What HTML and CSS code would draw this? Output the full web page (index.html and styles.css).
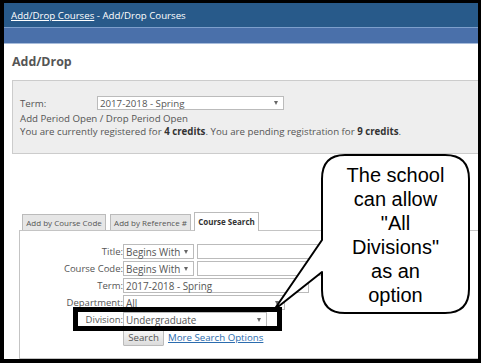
FILE: index.html
```html
<!DOCTYPE html>
<html lang="en">
<head>
<meta charset="utf-8">
<title>Add/Drop Courses</title>
<link rel="stylesheet" href="styles.css">
</head>
<body>
<div class="frame">
  <header class="topbar"><a class="crumb" href="#">Add/Drop Courses</a><span class="crumb-rest">&nbsp;- Add/Drop Courses</span></header>
  <div class="subbar"></div>
  <main class="content">
    <h1 class="title">Add/Drop</h1>
    <section class="termbox">
      <div class="termrow">
        <span class="termlabel">Term:</span>
        <div class="field sel term-sel"><span>2017-2018 - Spring</span><span class="caret"></span></div>
      </div>
      <p class="line">Add Period Open / Drop Period Open</p>
      <p class="line">You are currently registered for <b>4 credits</b>. You are pending registration for <b>9 credits</b>.</p>
    </section>
    <nav class="tabs">
      <span class="tab tab-code">Add by Course Code</span>
      <span class="tab tab-ref">Add by Reference #</span>
      <span class="tab tab-search active">Course Search</span>
    </nav>
    <section class="panel">
      <div class="row">
        <span class="lbl">Title:</span>
        <div class="field sel w-begins"><span>Begins With</span><span class="caret"></span></div>
        <div class="field w-text"></div>
      </div>
      <div class="row">
        <span class="lbl">Course Code:</span>
        <div class="field sel w-begins"><span>Begins With</span><span class="caret"></span></div>
        <div class="field w-text"></div>
      </div>
      <div class="row">
        <span class="lbl">Term:</span>
        <div class="field w-term"><span>2017-2018 - Spring</span></div>
      </div>
      <div class="row">
        <span class="lbl">Department:</span>
        <div class="field sel w-dept"><span>All</span><span class="caret"></span></div>
      </div>
      <div class="row">
        <span class="lbl">Division:</span>
        <div class="field sel w-div"><span>Undergraduate</span><span class="caret"></span></div>
      </div>
      <div class="row">
        <span class="lbl"></span>
        <button class="btn" type="button">Search</button>
        <a class="more" href="#">More Search Options</a>
      </div>
    </section>
  </main>
  <div class="highlight"></div>
  <svg class="callout" width="481" height="363" viewBox="0 0 481 363" aria-hidden="true">
    <path d="M 345 155 H 445 Q 469 155 469 179 V 289 Q 469 313 445 313 H 345 Q 322 313 322 290 V 272 L 274 310 L 322 240 V 179 Q 322 155 345 155 Z" fill="#fff" stroke="#000" stroke-width="2" stroke-linejoin="round"/>
  </svg>
  <div class="callout-text">The school<br>can allow<br>"All<br>Divisions"<br>as an<br>option</div>
</div>
</body>
</html>
```

FILE: styles.css
```css
* { box-sizing: border-box; }

body {
  margin: 0;
  background: #000;
  font-family: "Open Sans", "Noto Sans", sans-serif;
}

.frame {
  position: relative;
  width: 481px;
  height: 363px;
  border-style: solid;
  border-color: #000;
  border-width: 3px 3px 4px 4px;
  background: #fff;
  overflow: hidden;
}

.topbar {
  height: 25px;
  background: #285a8a;
  border-bottom: 1px solid #7d9fcc;
  color: #fff;
  font-size: 9.7px;
  padding-left: 7px;
  display: flex;
  align-items: center;
  white-space: nowrap;
}

.crumb { color: #fff; text-decoration: underline; }

.subbar {
  height: 16px;
  background: #4a70aa;
  border-bottom: 1px solid #a7bcdb;
}

.content { padding-left: 8px; }

.title {
  margin: 9px 0 10px;
  font-size: 12.4px;
  line-height: 17px;
  font-weight: 700;
  color: #555;
}

.termbox {
  margin-right: -20px;
  background: #eee;
  border: 1px solid #ccc;
  padding: 15px 0 15px 7px;
  font-size: 9.7px;
  color: #555;
}

.termrow {
  display: flex;
  align-items: center;
  margin-bottom: 2px;
}

.termlabel { width: 77px; }

.line {
  margin: 0;
  line-height: 13px;
  white-space: nowrap;
}

.line b { color: #333; }

.field {
  height: 15px;
  border: 1px solid #bbb;
  background: #fff;
  color: #555;
  font-size: 9.9px;
  padding: 0 3px 0 2px;
  display: flex;
  align-items: center;
  white-space: nowrap;
}

.sel { justify-content: space-between; }

.caret {
  width: 0;
  height: 0;
  border-left: 2.5px solid transparent;
  border-right: 2.5px solid transparent;
  border-top: 4px solid #666;
  margin-right: 2px;
}

.term-sel { width: 187px; height: 14px; font-size: 9.7px; }

.tabs {
  display: flex;
  align-items: flex-end;
  margin: 58px 0 -1px 10px;
  height: 19px;
}

.tab {
  height: 16px;
  margin-bottom: 1px;
  border: 1px solid #bbb;
  border-bottom: none;
  background: #e6e6e6;
  color: #555;
  font-size: 8px;
  display: flex;
  align-items: center;
  justify-content: center;
  white-space: nowrap;
}

.tab-code { width: 84px; }
.tab-ref { width: 81px; margin-left: 4px; }
.tab-search { width: 65px; margin-left: 3px; }

.tab.active {
  position: relative;
  z-index: 1;
  height: 19px;
  margin-bottom: 0;
  background: #fff;
  color: #333;
  font-weight: 700;
  padding-bottom: 2px;
}

.panel {
  margin: 0 -20px 0 7px;
  border: 1px solid #c4c4c4;
  padding: 13px 0 13px 0;
  height: 129px;
}

.row {
  display: flex;
  align-items: center;
  height: 15px;
  margin-bottom: 2px;
}

.lbl {
  width: 103px;
  text-align: right;
  font-size: 9.5px;
  color: #555;
  white-space: nowrap;
}

.w-begins { width: 71px; }
.w-text { width: 160px; margin-left: 3px; }
.w-term { width: 186px; }
.w-dept { width: 162px; }
.w-div { width: 144px; }

.btn {
  height: 16px;
  width: 41px;
  margin: 2px 0 0;
  padding: 0;
  border: 1px solid #bbb;
  border-radius: 1px;
  background: linear-gradient(#f6f6f6, #dcdcdc);
  color: #555;
  font-family: inherit;
  font-size: 9.7px;
}

.more {
  margin: 2px 0 0 4px;
  color: #2b6cae;
  font-size: 9.7px;
  text-decoration: underline;
  white-space: nowrap;
}

.highlight {
  position: absolute;
  left: 69px;
  top: 304px;
  width: 209px;
  height: 24px;
  border: 5px solid #000;
}

.callout {
  position: absolute;
  left: -4px;
  top: -3px;
}

.callout-text {
  position: absolute;
  left: 318px;
  top: 160px;
  width: 147px;
  text-align: center;
  font-family: "Liberation Sans", Arial, sans-serif;
  font-size: 20px;
  line-height: 24px;
  color: #000;
}
```
